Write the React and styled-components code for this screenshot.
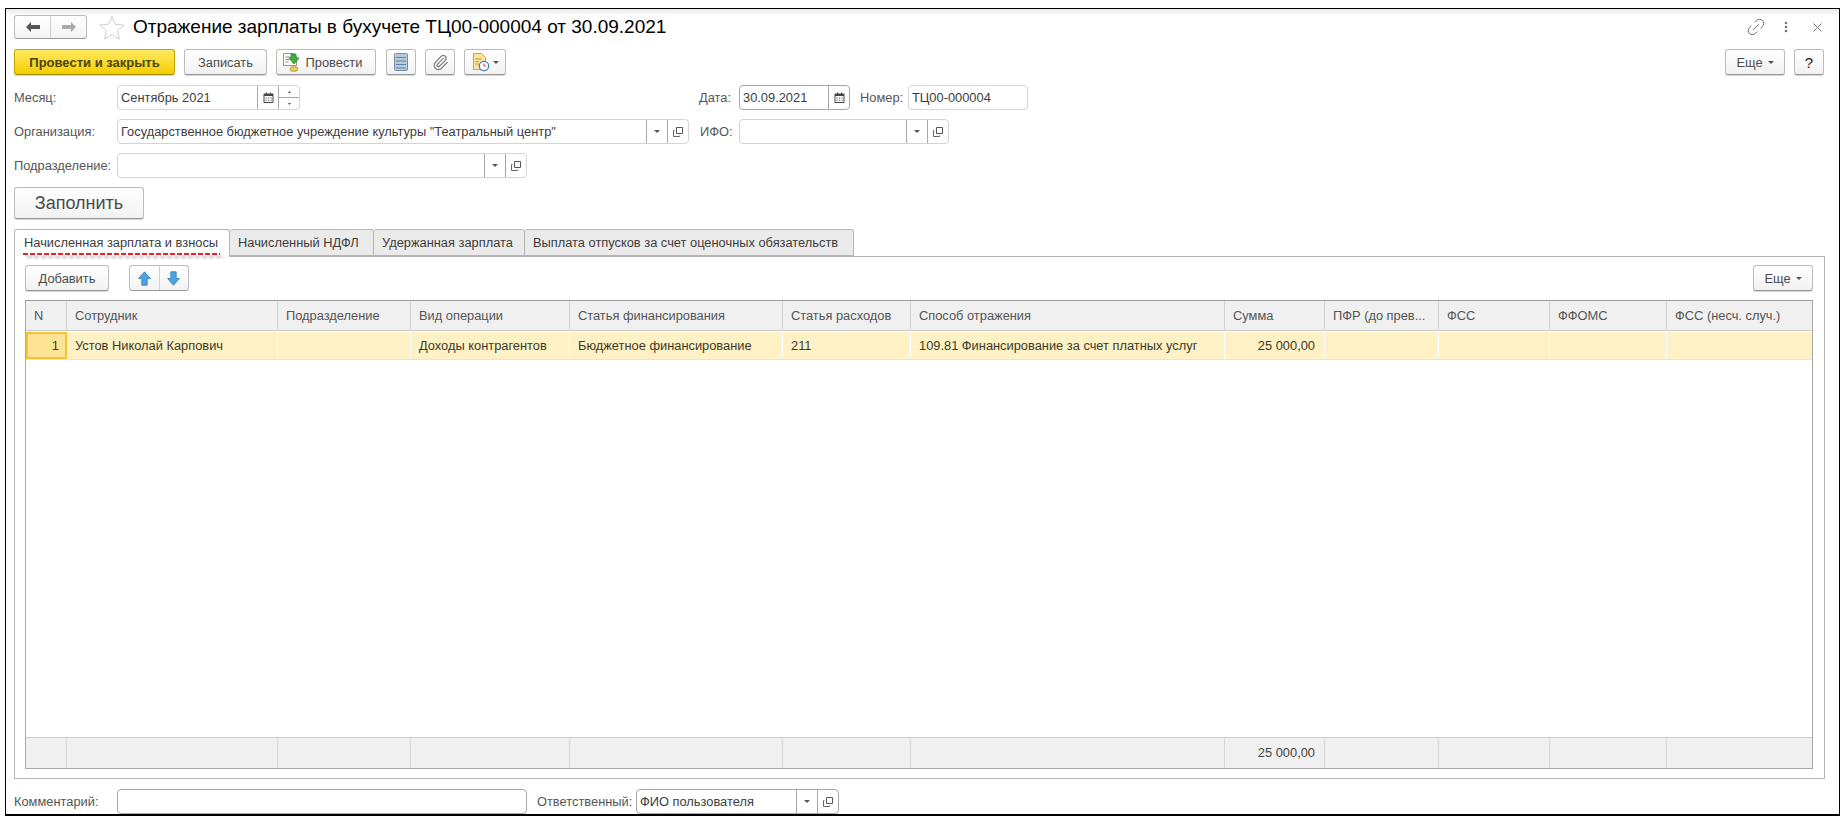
import React from "react";
import styled, { createGlobalStyle } from "styled-components";
import { Link2, Paperclip } from "lucide-react";

const GlobalStyle = createGlobalStyle`
  html, body {
    margin: 0;
    padding: 0;
    background: #fff;
    overflow: hidden;
  }
  * {
    box-sizing: border-box;
  }
`;

const Window = styled.div`
  display: flex;
  flex-direction: column;
  width: 1835px;
  height: 808px;
  margin: 8px 0 0 5px;
  padding: 6px 14px 0 8px;
  border: 1px solid #000;
  border-bottom-width: 2px;
  background: linear-gradient(#e9e9e9, #fff 7px);
  font-family: "Liberation Sans", Arial, sans-serif;
  font-size: 12.85px;
  color: #444;
  overflow: hidden;
`;

const TitleBar = styled.div`
  display: flex;
  align-items: center;
  height: 24px;
`;

const NavGroup = styled.div`
  display: flex;
  width: 73px;
  height: 24px;
  border: 1px solid #bdbdbd;
  border-bottom-color: #999;
  border-radius: 3px;
  background: linear-gradient(#fff, #f3f3f3);
`;

const NavButton = styled.div`
  flex: 1;
  display: flex;
  align-items: center;
  justify-content: center;
  & + & {
    border-left: 1px solid #cfcfcf;
  }
`;

const StarWrap = styled.div`
  display: flex;
  margin-left: 12px;
  width: 34px;
`;

const Title = styled.div`
  font-size: 19px;
  color: #000;
  white-space: nowrap;
`;

const WindowTools = styled.div`
  display: flex;
  align-items: center;
  margin-left: auto;
  margin-right: 3px;
  gap: 18px;
  color: #666;
`;

const CloseWrap = styled.div`
  display: flex;
  margin-left: 7px;
`;

const Toolbar = styled.div`
  display: flex;
  align-items: stretch;
  height: 26px;
  margin-top: 10px;
`;

const Button = styled.div`
  display: flex;
  align-items: center;
  justify-content: center;
  flex: none;
  gap: ${(p) => p.$gap || 0}px;
  width: ${(p) => p.$w}px;
  height: ${(p) => p.$h || 26}px;
  margin-left: ${(p) => p.$ml || 0}px;
  padding-right: ${(p) => p.$pr || 0}px;
  border: 1px solid #bcbcbc;
  border-bottom-color: #969696;
  border-radius: 3px;
  background: linear-gradient(#fff, #f2f2f2);
  box-shadow: 0 1px 0 #d6d6d6;
  font-size: ${(p) => p.$fs || 12.85}px;
  color: #4b4b4b;
  white-space: nowrap;
`;

const PrimaryButton = styled(Button)`
  border-color: #c0a500;
  border-bottom-color: #a58d00;
  background: linear-gradient(#ffea60, #f5cd00);
  font-size: 13px;
  font-weight: bold;
  color: #4c4510;
`;

const HelpButton = styled(Button)`
  font-size: 15px;
  color: #222;
`;

const FormRow = styled.div`
  display: flex;
  align-items: center;
  height: 25px;
  margin-top: ${(p) => p.$mt || 9}px;
`;

const Label = styled.div`
  flex: none;
  width: ${(p) => p.$w}px;
  margin-left: ${(p) => p.$ml || 0}px;
  color: #555;
  white-space: nowrap;
`;

const Field = styled.div`
  flex: none;
  display: flex;
  width: ${(p) => p.$w}px;
  height: 25px;
  border: 1px solid ${(p) => (p.$dark ? "#a8a8a8" : "#d4d4d4")};
  border-radius: 4px;
  background: #fff;
`;

const FieldValue = styled.div`
  flex: 1;
  min-width: 0;
  padding: 0 0 0 3px;
  line-height: 24px;
  color: #3d3d3d;
  white-space: nowrap;
  overflow: hidden;
`;

const FieldButton = styled.div`
  flex: none;
  display: flex;
  flex-direction: column;
  align-items: center;
  justify-content: center;
  width: 21px;
  border-left: 1px solid #a8a8a8;
`;

const SpinPart = styled.div`
  flex: 1;
  display: flex;
  align-items: center;
  justify-content: center;
  align-self: stretch;
  & + & {
    border-top: 1px solid #a8a8a8;
  }
`;

const FillButton = styled(Button)`
  margin-top: 9px;
`;

const TabBar = styled.div`
  display: flex;
  height: 27px;
  margin-top: 10px;
`;

const Tab = styled.div`
  position: relative;
  flex: none;
  width: ${(p) => p.$w}px;
  height: ${(p) => (p.$active ? 28 : 27)}px;
  padding-left: ${(p) => (p.$active ? 9 : 8)}px;
  border: 1px solid #b4b4b4;
  border-left-width: ${(p) => (p.$active ? 1 : 0)}px;
  border-bottom: ${(p) => (p.$active ? "none" : "1px solid #b4b4b4")};
  border-radius: 3px 3px 0 0;
  background: ${(p) => (p.$active ? "#fff" : "#ebebeb")};
  line-height: 25px;
  color: #3d3d3d;
  white-space: nowrap;
  z-index: ${(p) => (p.$active ? 1 : 0)};
`;

const RedDash = styled.div`
  position: absolute;
  left: 8px;
  top: 23px;
  width: 197px;
  height: 2px;
  background: repeating-linear-gradient(90deg, #e8202a 0 5px, transparent 5px 7px);
  filter: drop-shadow(4px 3px 1px #bbb);
`;

const Panel = styled.div`
  display: flex;
  flex-direction: column;
  height: 523px;
  padding: 8px 11px 9px 10px;
  border: 1px solid #b4b4b4;
`;

const PanelBar = styled.div`
  display: flex;
  height: 26px;
  flex: none;
`;

const ArrowGroup = styled(NavGroup)`
  width: 60px;
  height: 26px;
  margin-left: 20px;
`;

const PanelMore = styled(Button)`
  margin-left: auto;
`;

const Table = styled.div`
  flex: 1;
  display: flex;
  flex-direction: column;
  margin-top: 9px;
  border: 1px solid #a8a8a8;
  border-top-color: #9c9c9c;
  min-height: 0;
`;

const columns = [41, 211, 133, 159, 213, 128, 314, 100, 114, 111, 117, 145];

const Grid = styled.div`
  display: grid;
  flex: none;
  grid-template-columns: ${columns.map((c) => c + "px").join(" ")};
`;

const HeadRow = styled(Grid)`
  height: 30px;
  border-bottom: 1px solid #c8c8c8;
  background: #f0f0f0;
`;

const HeadCell = styled.div`
  padding-left: ${(p) => (p.$first ? 8 : 8)}px;
  border-right: 1px solid #d2d2d2;
  line-height: 29px;
  color: #555;
  white-space: nowrap;
  overflow: hidden;
  &:last-child {
    border-right: none;
  }
`;

const DataRow = styled(Grid)`
  height: 28px;
  margin-top: 1px;
  border-bottom: 1px solid #e4e4e4;
`;

const DataCell = styled.div`
  padding: 0 ${(p) => (p.$right ? 9 : 0)}px 0 ${(p) => (p.$right ? 0 : 8)}px;
  background: #fdf1c5;
  border-right: 1px solid #fff;
  line-height: 28px;
  color: #3d3a2a;
  text-align: ${(p) => (p.$right ? "right" : "left")};
  white-space: nowrap;
  overflow: hidden;
  &:last-child {
    border-right: none;
  }
`;

const CurrentCell = styled(DataCell)`
  border: 2px solid #f6c337;
  background: #fde494;
  padding-right: 6px;
  line-height: 24px;
  text-align: right;
`;

const TableBody = styled.div`
  flex: 1;
  background: #fff;
`;

const FootRow = styled(Grid)`
  height: 31px;
  border-top: 1px solid #cdcdcd;
  background: #f0f0f0;
`;

const FootCell = styled.div`
  padding-right: ${(p) => (p.$right ? 9 : 0)}px;
  border-right: 1px solid #d6d6d6;
  line-height: 30px;
  color: #444;
  text-align: right;
  &:last-child {
    border-right: none;
  }
`;

const Spacer = styled.div`
  flex: none;
  width: ${(p) => p.$w}px;
`;

const Dropdown = ({ color = "#555" }) => (
  <svg width="6" height="3" viewBox="0 0 6 3">
    <path d="M0 0h6L3 3z" fill={color} />
  </svg>
);

const ArrowLeft = ({ color }) => (
  <svg width="14" height="10" viewBox="0 0 14 10">
    <path d="M0 5l5-5v3h9v4H5v3z" fill={color} />
  </svg>
);

const ArrowRight = ({ color }) => (
  <svg width="14" height="10" viewBox="0 0 14 10">
    <path d="M14 5L9 0v3H0v4h9v3z" fill={color} />
  </svg>
);

const BlueArrow = ({ down }) => (
  <svg width="13" height="15" viewBox="0 0 13 15">
    <g transform={down ? "rotate(180 6.5 7.5)" : undefined}>
      <path d="M6.5.8L12.4 7.5H9.2v6.7H3.8V7.5H.6z" fill="#4ba3e3" stroke="#2b7fbd" strokeWidth=".8" />
    </g>
  </svg>
);

const Star = () => (
  <svg width="26" height="25" viewBox="0 0 26 25">
    <path
      d="M13 1.5l3.4 7.8 8.5.8-6.4 5.6 1.9 8.3L13 19.7 5.6 24l1.9-8.3L1.1 10l8.5-.8z"
      fill="#fff"
      stroke="#c9ced3"
    />
  </svg>
);

const Calendar = () => (
  <svg width="11" height="11" viewBox="0 0 11 11">
    <path d="M1 2h9v8.5H1z" fill="#fff" stroke="#444" />
    <path d="M1 2h9v2H1zM3 .5h1v2H3zM7 .5h1v2H7z" fill="#444" />
    <path d="M2.5 5.5h1.2v1H2.5zM5 5.5h1.2v1H5zM7.5 5.5h1.2v1H7.5zM2.5 7.8h1.2v1H2.5zM5 7.8h1.2v1H5zM7.5 7.8h1.2v1H7.5z" fill="#555" />
  </svg>
);

const OpenIcon = () => (
  <svg width="10" height="10" viewBox="0 0 10 10">
    <path d="M3.5.5h6v6h-6z" fill="none" stroke="#555" />
    <path d="M1.5 3.5H.5v6h6v-1" fill="none" stroke="#666" />
  </svg>
);

const DocListIcon = () => (
  <svg width="14" height="18" viewBox="0 0 14 18">
    <rect x=".5" y=".5" width="13" height="17" rx="1" fill="#b7cbdc" stroke="#6f8ea8" />
    <path d="M2 4.5h10M2 8h10M2 11.5h10M2 15h10" stroke="#5f829f" strokeWidth="1.2" />
  </svg>
);

const PostIcon = () => (
  <svg width="19" height="20" viewBox="0 0 19 20">
    <path d="M1.5 1.5h10l3 3v9h-13z" fill="#fdfdf4" stroke="#9a9a80" />
    <path d="M3.5 5h5M3.5 7.5h4M3.5 10h3" stroke="#8a8a8a" />
    <ellipse cx="12" cy="17" rx="4" ry="2.3" fill="#f1d35c" stroke="#b7983a" />
    <path d="M9 2h5v4h3l-5 6-5-6h2z" fill="#3fae3c" stroke="#1d7f2b" strokeWidth=".7" />
  </svg>
);

const ReportIcon = () => (
  <svg width="18" height="19" viewBox="0 0 18 19">
    <path d="M1.5.5h8l4 4v12h-12z" fill="#fbe39a" stroke="#c6a450" />
    <path d="M3.5 6h6M3.5 8.5h3M3.5 11h3" stroke="#b9974a" />
    <circle cx="12" cy="13" r="4.7" fill="#fff" stroke="#4c82bb" strokeWidth="1.3" />
    <path d="M12 10.5V13h2" fill="none" stroke="#d9433f" />
  </svg>
);

const LinkTool = styled(Link2)`
  transform: rotate(-45deg) scaleX(1.1);
`;

const ClipIcon = styled(Paperclip)`
  color: #6f6f6f;
`;

const Dots = () => (
  <svg width="4" height="12" viewBox="0 0 4 12">
    <circle cx="2" cy="2" r="1.3" fill="#777" />
    <circle cx="2" cy="6" r="1.3" fill="#777" />
    <circle cx="2" cy="10" r="1.3" fill="#777" />
  </svg>
);

const CloseIcon = () => (
  <svg width="9" height="9" viewBox="0 0 9 9">
    <path d="M.5.5l8 8M8.5.5l-8 8" stroke="#777" />
  </svg>
);

const heads = [
  "N",
  "Сотрудник",
  "Подразделение",
  "Вид операции",
  "Статья финансирования",
  "Статья расходов",
  "Способ отражения",
  "Сумма",
  "ПФР (до прев...",
  "ФСС",
  "ФФОМС",
  "ФСС (несч. случ.)"
];

const cells = [
  "Устов Николай Карпович",
  "",
  "Доходы контрагентов",
  "Бюджетное финансирование",
  "211",
  "109.81 Финансирование за счет платных услуг"
];

const SelectButtons = () => (
  <>
    <FieldButton>
      <Dropdown />
    </FieldButton>
    <FieldButton>
      <OpenIcon />
    </FieldButton>
  </>
);

export default function App() {
  return (
    <Window>
      <GlobalStyle />
      <TitleBar>
        <NavGroup>
          <NavButton>
            <ArrowLeft color="#555" />
          </NavButton>
          <NavButton>
            <ArrowRight color="#aaa" />
          </NavButton>
        </NavGroup>
        <StarWrap>
          <Star />
        </StarWrap>
        <Title>Отражение зарплаты в бухучете ТЦ00-000004 от 30.09.2021</Title>
        <WindowTools>
          <LinkTool size={20} strokeWidth={1} />
          <Dots />
          <CloseWrap>
            <CloseIcon />
          </CloseWrap>
        </WindowTools>
      </TitleBar>

      <Toolbar>
        <PrimaryButton $w={161}>Провести и закрыть</PrimaryButton>
        <Button $w={83} $ml={9}>
          Записать
        </Button>
        <Button $w={100} $ml={9} $gap={5} $pr={8}>
          <PostIcon />
          Провести
        </Button>
        <Button $w={30} $ml={10}>
          <DocListIcon />
        </Button>
        <Button $w={30} $ml={9}>
          <ClipIcon size={17} strokeWidth={1.5} />
        </Button>
        <Button $w={42} $ml={9} $gap={3}>
          <ReportIcon />
          <Dropdown />
        </Button>
        <Button $w={60} $ml={1219} $gap={5}>
          Еще
          <Dropdown />
        </Button>
        <HelpButton $w={30} $ml={9}>
          ?
        </HelpButton>
      </Toolbar>

      <FormRow $mt={10}>
        <Label $w={103}>Месяц:</Label>
        <Field $w={183}>
          <FieldValue>Сентябрь 2021</FieldValue>
          <FieldButton>
            <Calendar />
          </FieldButton>
          <FieldButton>
            <SpinPart>
              <svg width="3" height="2" viewBox="0 0 3 2">
                <path d="M0 2h3L1.5 0z" fill="#555" />
              </svg>
            </SpinPart>
            <SpinPart>
              <svg width="3" height="2" viewBox="0 0 3 2">
                <path d="M0 0h3L1.5 2z" fill="#555" />
              </svg>
            </SpinPart>
          </FieldButton>
        </Field>
        <Label $w={40} $ml={399}>
          Дата:
        </Label>
        <Field $w={111} $dark>
          <FieldValue>30.09.2021</FieldValue>
          <FieldButton>
            <Calendar />
          </FieldButton>
        </Field>
        <Label $w={48} $ml={10}>
          Номер:
        </Label>
        <Field $w={120}>
          <FieldValue>ТЦ00-000004</FieldValue>
        </Field>
      </FormRow>

      <FormRow>
        <Label $w={103}>Организация:</Label>
        <Field $w={572}>
          <FieldValue>Государственное бюджетное учреждение культуры "Театральный центр"</FieldValue>
          <SelectButtons />
        </Field>
        <Label $w={39} $ml={11}>
          ИФО:
        </Label>
        <Field $w={210}>
          <FieldValue />
          <SelectButtons />
        </Field>
      </FormRow>

      <FormRow>
        <Label $w={103}>Подразделение:</Label>
        <Field $w={410}>
          <FieldValue />
          <SelectButtons />
        </Field>
      </FormRow>

      <FillButton $w={130} $h={32} $fs={18}>
        Заполнить
      </FillButton>

      <TabBar>
        <Tab $w={216} $active>
          Начисленная зарплата и взносы
          <RedDash />
        </Tab>
        <Tab $w={144}>Начисленный НДФЛ</Tab>
        <Tab $w={151}>Удержанная зарплата</Tab>
        <Tab $w={329}>Выплата отпусков за счет оценочных обязательств</Tab>
      </TabBar>

      <Panel>
        <PanelBar>
          <Button $w={84}>Добавить</Button>
          <ArrowGroup>
            <NavButton>
              <BlueArrow />
            </NavButton>
            <NavButton>
              <BlueArrow down />
            </NavButton>
          </ArrowGroup>
          <PanelMore $w={60} $gap={5}>
            Еще
            <Dropdown />
          </PanelMore>
        </PanelBar>

        <Table>
          <HeadRow>
            {heads.map((h) => (
              <HeadCell key={h}>{h}</HeadCell>
            ))}
          </HeadRow>
          <DataRow>
            <CurrentCell>1</CurrentCell>
            {cells.map((c, i) => (
              <DataCell key={i}>{c}</DataCell>
            ))}
            <DataCell $right>25 000,00</DataCell>
            <DataCell />
            <DataCell />
            <DataCell />
            <DataCell />
          </DataRow>
          <TableBody />
          <FootRow>
            {columns.map((c, i) => (
              <FootCell key={i} $right={i === 7}>
                {i === 7 ? "25 000,00" : ""}
              </FootCell>
            ))}
          </FootRow>
        </Table>
      </Panel>

      <FormRow $mt={10}>
        <Label $w={103}>Комментарий:</Label>
        <Field $w={410} $dark />
        <Spacer $w={10} />
        <Label $w={99}>Ответственный:</Label>
        <Field $w={203} $dark>
          <FieldValue>ФИО пользователя</FieldValue>
          <SelectButtons />
        </Field>
      </FormRow>
    </Window>
  );
}
